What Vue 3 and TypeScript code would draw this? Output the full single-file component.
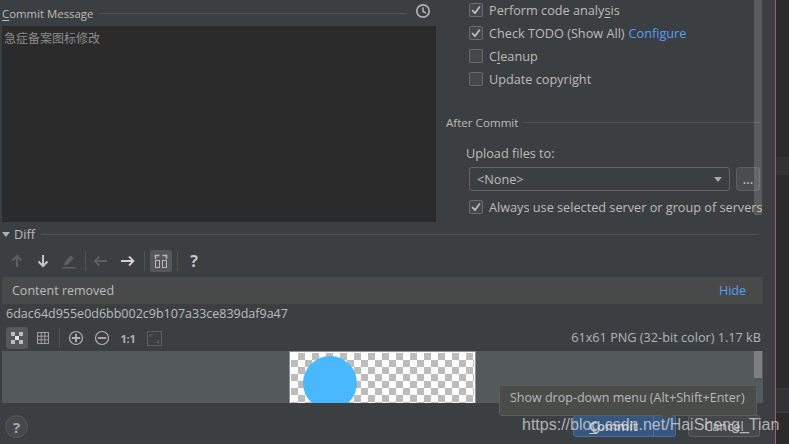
<script setup lang="ts">
const commitText: string = '急症备案图标修改'
const hash: string = '6dac64d955e0d6bb002c9b107a33ce839daf9a47'
</script>

<template>
  <div class="app">
    <div class="dialog">
      <section class="top">
        <div class="left">
          <div class="msg-head">
            <span class="title"><u>C</u>ommit Message</span>
            <i class="rule"></i>
            <svg class="clock" width="16" height="16" viewBox="0 0 16 16" fill="none" stroke="#afb1b3">
              <circle cx="8" cy="8" r="6.2" stroke-width="1.7" />
              <path d="M8 4.2V8.4L11 10" stroke-width="1.6" />
            </svg>
          </div>
          <div class="textarea">{{ commitText }}</div>
        </div>
        <div class="right">
          <label class="check"><span class="box on"><svg width="14" height="14" viewBox="0 0 14 14"><path d="M3.2 7.2 6 10.2 10.8 3.4" fill="none" stroke="#bdbdbd" stroke-width="1.8" /></svg></span>Perform code analy<u>s</u>is</label>
          <label class="check"><span class="box on"><svg width="14" height="14" viewBox="0 0 14 14"><path d="M3.2 7.2 6 10.2 10.8 3.4" fill="none" stroke="#bdbdbd" stroke-width="1.8" /></svg></span>Check TODO (Show All)<a class="link">Configure</a></label>
          <label class="check"><span class="box"></span>C<u>l</u>eanup</label>
          <label class="check"><span class="box"></span>Update copyright</label>
          <div class="after"><span>After Commit</span><i class="rule"></i></div>
          <div class="upload">Upload files to:</div>
          <div class="combo-row">
            <div class="combo"><span>&lt;None&gt;</span><i class="caret"></i></div>
            <div class="dots">...</div>
          </div>
          <label class="check last"><span class="box on"><svg width="14" height="14" viewBox="0 0 14 14"><path d="M3.2 7.2 6 10.2 10.8 3.4" fill="none" stroke="#bdbdbd" stroke-width="1.8" /></svg></span>Always use selected server or group of servers</label>
          <div class="vscroll"></div>
        </div>
      </section>

      <div class="diff-head">
        <i class="tri"></i><span>Diff</span><i class="rule"></i>
      </div>

      <div class="toolbar one">
        <span class="tb"><svg width="16" height="16" viewBox="0 0 16 16" fill="none" stroke="#5c5f61" stroke-width="2"><path d="M8 14V3M3.5 7.5 8 3l4.500 4.500" /></svg></span>
        <span class="tb"><svg width="16" height="16" viewBox="0 0 16 16" fill="none" stroke="#c4c4c4" stroke-width="2"><path d="M8 2v11M3.5 8.5 8 13l4.500-4.500" /></svg></span>
        <span class="tb"><svg width="16" height="16" viewBox="0 0 16 16" fill="#5c5f61"><path d="M9.500 2.500 13 5l-6 6.500-4 1 .8-3.700zM1 14h14v1.500H1z" /></svg></span>
        <i class="sep"></i>
        <span class="tb shift"><svg width="16" height="16" viewBox="0 0 16 16" fill="none" stroke="#5c5f61" stroke-width="1.8"><path d="M14 8H2M6.500 3.500 2 8l4.500 4.500" /></svg></span>
        <span class="tb"><svg width="16" height="16" viewBox="0 0 16 16" fill="none" stroke="#d0d0d0" stroke-width="1.8"><path d="M1 8h12.500M9 3.500 13.500 8 9 12.500" /></svg></span>
        <i class="sep"></i>
        <span class="tb active"><svg width="14" height="15" viewBox="0 0 14 15" fill="none" stroke="#b5b7b9"><path d="M1.500 5V1.500h4M12.500 5V1.500h-4" stroke-width="1.500" /><rect x="1.500" y="6.500" width="4" height="7" /><rect x="8.500" y="6.500" width="4" height="7" /></svg></span>
        <i class="sep"></i>
        <span class="tb help">?</span>
      </div>

      <div class="banner">
        <span>Content removed</span>
        <a class="link">Hide</a>
      </div>

      <div class="hash">{{ hash }}</div>

      <div class="toolbar two">
        <span class="tb active"><svg width="14" height="14" viewBox="0 0 14 14"><path fill="#b9bbbd" d="M1 1h4v4H1zM9 1h4v4H9zM1 9h4v4H1zM9 9h4v4H9z" /><path fill="#dfe1e2" d="M5 5h4v4H5z" /></svg></span>
        <span class="tb"><svg width="14" height="14" viewBox="0 0 14 14" fill="none" stroke="#9fa1a3"><path d="M1.500 1.500h11v11h-11zM5.200 1.500v11M8.800 1.500v11M1.500 5.200h11M1.500 8.800h11" /></svg></span>
        <i class="sep"></i>
        <span class="tb"><svg width="16" height="16" viewBox="0 0 16 16" fill="none" stroke="#afb1b3"><circle cx="8" cy="8" r="6.500" stroke-width="1.200" /><path d="M8 3.800v8.400M3.800 8h8.400" stroke-width="1.800" /></svg></span>
        <span class="tb"><svg width="16" height="16" viewBox="0 0 16 16" fill="none" stroke="#afb1b3"><circle cx="8" cy="8" r="6.500" stroke-width="1.200" /><path d="M3.800 8h8.400" stroke-width="1.800" /></svg></span>
        <span class="tb ratio">1:1</span>
        <span class="tb"><svg width="15" height="15" viewBox="0 0 15 15" fill="none" stroke="#5c5f61"><path d="M.5.500h14v14H.5z" stroke-width="1.200" /><path d="M3.500 6V3.500H6M11.500 9v2.500H9" stroke-width="1.200" /></svg></span>
        <span class="meta">61x61 PNG (32-bit color) 1.17 kB</span>
      </div>

      <div class="viewer">
        <div class="picture"><span class="circle"></span></div>
        <div class="thumb"></div>
      </div>

      <footer class="foot">
        <span class="round">?</span>
        <div class="btn commit">
          <span class="main"><u>C</u>ommit</span>
          <span class="arrow"></span>
        </div>
        <div class="btn cancel">Cancel</div>
      </footer>
    </div>

    <aside class="strip">
      <div class="band b1"></div>
      <div class="band b2"></div>
      <div class="band b3"></div>
    </aside>

    <div class="tooltip">Show drop-down menu (Alt+Shift+Enter)</div>
    <div class="watermark">https://blog.csdn.net/HaiSheng_Tian</div>
  </div>
</template>

<style scoped>
.app {
  position: relative;
  display: flex;
  width: 789px;
  height: 444px;
  overflow: hidden;
  background: #3c3f41;
  color: #bbbbbb;
  font-family: "Open Sans", "Noto Sans CJK SC", sans-serif;
  font-size: 12.7px;
}
.dialog {
  width: 775px;
  flex: none;
  display: flex;
  flex-direction: column;
}
.rule {
  flex: 1;
  height: 1px;
  background: #505355;
}
u { text-underline-offset: 2px; }
.link { color: #589df6; }

.top {
  height: 223px;
  flex: none;
  display: grid;
  grid-template-columns: 446px 1fr;
}
.left { padding-left: 2px; }
.msg-head {
  height: 26px;
  width: 434px;
  display: flex;
  align-items: center;
  gap: 6px;
  box-sizing: border-box;
}
.title { font-size: 11.4px; }
.msg-head .rule { margin-right: 2px; }
.clock { margin: -4px 5px 0 0; }
.textarea {
  width: 434px;
  height: 196px;
  box-sizing: border-box;
  background: #2b2b2b;
  padding: 4px 2px;
  color: #8c8c8c;
  font-family: "Noto Sans CJK SC", sans-serif;
  font-size: 12px;
  line-height: 16px;
}
.right {
  position: relative;
  display: flex;
  flex-direction: column;
  gap: 3px;
}
.check {
  height: 20px;
  display: flex;
  align-items: center;
  margin-left: 23px;
  white-space: nowrap;
}
.box {
  width: 14px;
  height: 14px;
  box-sizing: border-box;
  border: 1px solid #6b6b6b;
  border-radius: 2px;
  background: #43494a;
  margin-right: 6px;
  flex: none;
  display: flex;
  align-items: center;
  justify-content: center;
}
.box svg { flex: none; }
.link { margin-left: 4px; }
.after {
  margin-top: 20px;
  height: 20px;
  display: flex;
  align-items: center;
  gap: 5px;
  width: 314px;
  font-size: 11.6px;
}
.upload {
  height: 20px;
  line-height: 20px;
  margin: 8px 0 0 20px;
}
.combo-row {
  display: flex;
  gap: 6px;
  margin: 1px 0 0 23px;
}
.combo {
  width: 261px;
  height: 24px;
  box-sizing: border-box;
  border: 1px solid #646464;
  border-radius: 3px;
  padding: 0 7px;
  display: flex;
  align-items: center;
  justify-content: space-between;
}
.caret {
  width: 0;
  height: 0;
  border-left: 4.5px solid transparent;
  border-right: 4.5px solid transparent;
  border-top: 5px solid #a7a7a7;
}
.dots {
  width: 24px;
  height: 24px;
  box-sizing: border-box;
  border: 1px solid #5e6060;
  border-radius: 3px;
  background: #4a4d4f;
  text-align: center;
  line-height: 22px;
  font-weight: 600;
}
.last { margin-top: 3px; }
.vscroll {
  position: absolute;
  left: 308px;
  top: 0;
  width: 8px;
  height: 215px;
  background: rgba(255, 255, 255, 0.15);
}

.diff-head {
  height: 22px;
  flex: none;
  display: flex;
  align-items: center;
  padding: 0 17px 0 2px;
  gap: 4px;
}
.diff-head span { margin-right: 2px; }
.tri {
  width: 0;
  height: 0;
  border-left: 4.5px solid transparent;
  border-right: 4.5px solid transparent;
  border-top: 5px solid #b0b0b0;
}
.toolbar {
  display: flex;
  align-items: center;
  gap: 4px;
  padding: 0 14px 0 6px;
  flex: none;
}
.toolbar.one { height: 32px; }
.toolbar.two { height: 26px; }
.tb {
  width: 22px;
  height: 22px;
  border-radius: 3px;
  display: flex;
  align-items: center;
  justify-content: center;
  flex: none;
}
.tb.shift { margin-left: -1px; margin-right: 1px; }
.tb.active { background: #55585a; }
.tb.help {
  font-weight: 700;
  font-size: 16px;
  color: #c6c6c6;
}
.tb.ratio {
  font-weight: 700;
  font-size: 11px;
  color: #afb1b3;
  letter-spacing: -0.3px;
}
.sep {
  width: 1px;
  height: 20px;
  background: #505355;
  margin: 0 1px;
  flex: none;
}
.meta {
  margin-left: auto;
  margin-bottom: 2px;
  color: #b0b4b8;
}
.banner {
  height: 27px;
  flex: none;
  margin-left: 2px;
  width: 761px;
  box-sizing: border-box;
  background: #484a4a;
  display: flex;
  align-items: center;
  justify-content: space-between;
  padding: 0 17px 0 10px;
  font-size: 12.5px;
}
.hash {
  height: 21px;
  flex: none;
  line-height: 19px;
  padding-left: 6px;
  color: #b9bdc0;
  font-size: 12.5px;
}
.viewer {
  position: relative;
  height: 52px;
  flex: none;
  width: 761px;
  margin-left: 2px;
  background: #54595b;
  overflow: hidden;
  display: flex;
  justify-content: center;
}
.picture {
  position: relative;
  width: 187px;
  height: 70px;
  flex: none;
  box-sizing: border-box;
  border: 2px solid #ffffff;
  outline: 1px solid #8d9294;
  outline-offset: -1px;
  overflow: hidden;
  background-color: #ffffff;
  background-image: conic-gradient(#bcbcbc 25%, #ffffff 0 50%, #bcbcbc 0 75%, #ffffff 0);
  background-size: 14px 14px;
}
.circle {
  position: absolute;
  left: 12px;
  top: 3px;
  width: 54px;
  height: 54px;
  border-radius: 50%;
  background: #4ab8ff;
}
.thumb {
  position: absolute;
  left: 752px;
  top: 0;
  width: 8px;
  height: 27px;
  background: #7a8082;
}
.foot {
  flex: 1;
  display: flex;
  align-items: flex-start;
  padding: 12px 15px 0 5px;
  gap: 12px;
}
.round {
  width: 23px;
  height: 23px;
  box-sizing: border-box;
  border-radius: 50%;
  background: #46494b;
  border: 1px solid #55585a;
  display: flex;
  align-items: center;
  justify-content: center;
  font-weight: 700;
  font-size: 15px;
  color: #a6a8aa;
  margin-right: auto;
}
.btn {
  height: 22px;
  box-sizing: border-box;
  border-radius: 3px;
  display: flex;
  align-items: center;
  justify-content: center;
}
.commit {
  width: 103px;
  background: #365880;
  border: 1px solid #4a6f94;
  color: #c9c9c9;
  font-weight: 600;
}
.commit .main {
  width: 79px;
  text-align: center;
}
.commit .arrow {
  flex: 1;
  align-self: stretch;
  border-left: 1px solid #4a6f94;
}
.cancel {
  width: 72px;
  background: #45484a;
  border: 1px solid #5e6060;
}
.strip {
  position: relative;
  flex: 1;
  background: #2b2b2b;
  border-left: 1px solid #a0626f;
}
.band {
  position: absolute;
  left: 0;
  right: 0;
}
.b1 { top: 157px; height: 18px; background: #323232; }
.b2 { top: 388px; height: 24px; background: #313335; border-top: 1px solid #3a3a3a; }
.b3 { top: 412px; bottom: 0; background: #2b2b2b; border-top: 1px solid #3d3d3d; }
.tooltip {
  position: absolute;
  left: 499px;
  top: 385px;
  width: 258px;
  height: 31px;
  box-sizing: border-box;
  background: #4a4c4a;
  border: 1px solid #5b5d5c;
  border-radius: 3px;
  padding-left: 10px;
  line-height: 24px;
  font-size: 12.5px;
  color: #b8b8b8;
}
.tooltip::after {
  content: "";
  position: absolute;
  left: 161px;
  top: 29px;
  width: 0;
  height: 0;
  border-left: 6px solid transparent;
  border-right: 6px solid transparent;
  border-top: 6px solid #4a4c4a;
}
.watermark {
  position: absolute;
  left: 522px;
  top: 414px;
  font-family: "Liberation Sans", Arial, sans-serif;
  font-size: 16px;
  line-height: 22px;
  color: rgba(224, 224, 224, 0.72);
  white-space: nowrap;
}
</style>
